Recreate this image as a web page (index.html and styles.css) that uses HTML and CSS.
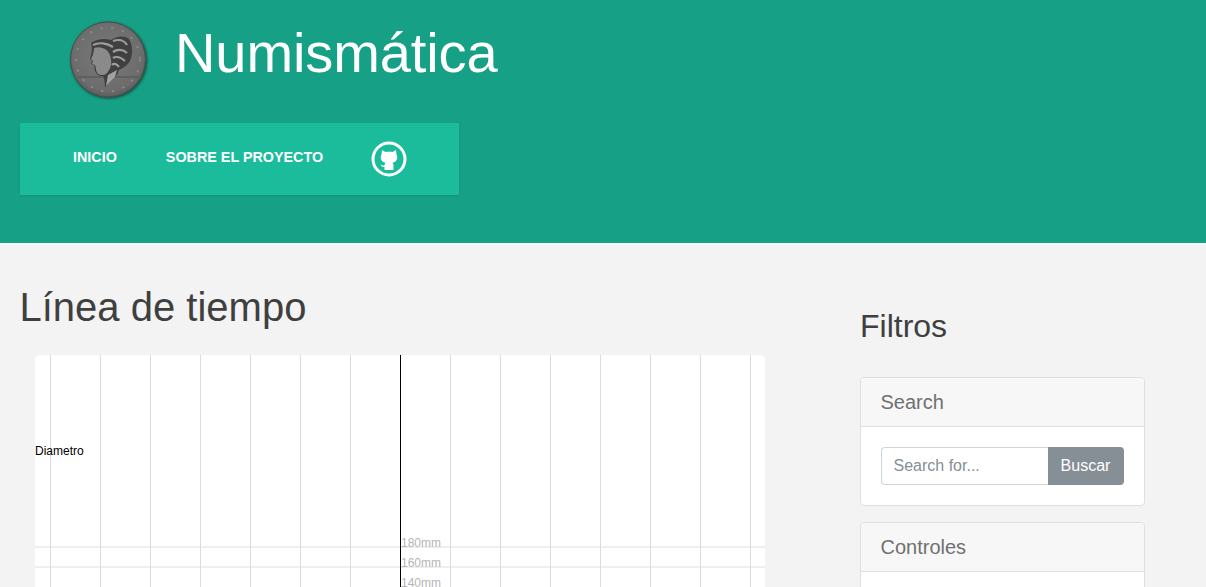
FILE: index.html
```html
<!DOCTYPE html>
<html lang="es">
<head>
    <meta charset="UTF-8">
    <title>Numismática</title>
    <link rel="stylesheet" href="styles.css">
</head>
<body>
    <header class="site-header">
        <div class="brand">
            <svg class="coin" width="80" height="80" viewBox="0 0 80 80">
                <defs>
                    <radialGradient id="coinFill" cx="50%" cy="45%" r="55%">
                        <stop offset="0" stop-color="#7b7b7b"/>
                        <stop offset="0.85" stop-color="#6c6c6c"/>
                        <stop offset="1" stop-color="#5c5c5c"/>
                    </radialGradient>
                    <filter id="soft" x="-10%" y="-10%" width="120%" height="120%">
                        <feGaussianBlur stdDeviation="0.6"/>
                    </filter>
                    <filter id="edge" x="-10%" y="-10%" width="120%" height="120%">
                        <feGaussianBlur stdDeviation="1"/>
                    </filter>
                </defs>
                <circle cx="40" cy="40.5" r="38.5" fill="#1e4a40" opacity="0.85" filter="url(#edge)"/>
                <circle cx="39" cy="39.5" r="37.5" fill="url(#coinFill)" stroke="#4c4c4c" stroke-width="1"/>
                <g filter="url(#soft)">
                    <circle cx="39" cy="39.5" r="32" fill="none" stroke="#8a8a8a" stroke-width="2" stroke-dasharray="2 9"/>
                    <path d="M6 57 H72" stroke="#606060" stroke-width="2"/>
                    <path d="M22 23 C27 19 36 18 42 20 C48 16 55 15 60 19 C64 25 64 35 61 41 C58 46 54 48 50 50 L48 55 L36 67 C36 62 35 58 34 56 C30 56 27 54 26 51 L25 45 L22 44 L23 41 L21 39 C22 34 24 30 22 23 Z" fill="#404040"/>
                    <path d="M25 28 C31 26 37 28 40 33 C43 39 43 46 40 50 C38 54 36 55 33 55 C29 55 27 52 27 49 L26 45 L23 44 L24 41 L22 39 C24 35 25 32 25 28 Z" fill="#8a8a8a"/>
                    <path d="M24 25 C30 22 38 23 44 27 M44 21 C50 19 55 20 58 25 M44 32 C48 29 54 29 58 33 M44 38 C47 36 52 37 56 41 M43 45 C45 43 48 44 50 47" fill="none" stroke="#9c9c9c" stroke-width="2.2"/>
                    <path d="M39 55 L48 50 L46 57 L37 66 Z" fill="#a2a2a2"/>
                </g>
            </svg>
            <h1 class="site-title">Numismática</h1>
        </div>
        <nav class="main-nav">
            <a class="nav-link nav-first" href="#">INICIO</a>
            <a class="nav-link nav-second" href="#">SOBRE EL PROYECTO</a>
            <a class="nav-github" href="#">
                <svg width="36" height="36" viewBox="0 0 36 36">
                    <circle cx="18" cy="18" r="16" fill="none" stroke="#fff" stroke-width="3"/>
                    <path d="M11 9 L14.5 11 C16.5 10.5 19.5 10.5 21.5 11 L25 9 L25.5 13.5 C26.8 15.5 26.5 19 24.5 20.5 C23.5 21.2 22.5 21.6 21.5 21.8 C22.2 22.5 22.5 23.4 22.5 24.5 L22.5 29 L13.5 29 L13.5 26 C11.5 26.2 10.5 25.4 9.5 23.5 C10.8 24 12 24.8 13.5 24.5 C13.5 23.4 13.8 22.5 14.5 21.8 C13.5 21.6 12.5 21.2 11.5 20.5 C9.5 19 9.2 15.5 10.5 13.5 Z" fill="#fff"/>
                </svg>
            </a>
        </nav>
    </header>

    <main class="content">
        <section class="timeline-col">
            <h2 class="timeline-title">Línea de tiempo</h2>
            <div class="timeline-chart">
                <svg width="730" height="232" viewBox="0 0 730 232">
                    <g class="grid-x">
                        <line x1="15.5" y1="0" x2="15.5" y2="232"/>
                        <line x1="65.5" y1="0" x2="65.5" y2="232"/>
                        <line x1="115.5" y1="0" x2="115.5" y2="232"/>
                        <line x1="165.5" y1="0" x2="165.5" y2="232"/>
                        <line x1="215.5" y1="0" x2="215.5" y2="232"/>
                        <line x1="265.5" y1="0" x2="265.5" y2="232"/>
                        <line x1="315.5" y1="0" x2="315.5" y2="232"/>
                        <line x1="415.5" y1="0" x2="415.5" y2="232"/>
                        <line x1="465.5" y1="0" x2="465.5" y2="232"/>
                        <line x1="515.5" y1="0" x2="515.5" y2="232"/>
                        <line x1="565.5" y1="0" x2="565.5" y2="232"/>
                        <line x1="615.5" y1="0" x2="615.5" y2="232"/>
                        <line x1="665.5" y1="0" x2="665.5" y2="232"/>
                        <line x1="715.5" y1="0" x2="715.5" y2="232"/>
                    </g>
                    <g class="grid-y">
                        <line x1="0" y1="192" x2="730" y2="192"/>
                        <line x1="0" y1="212" x2="730" y2="212"/>
                    </g>
                    <line class="axis" x1="365.5" y1="0" x2="365.5" y2="232"/>
                    <text class="label-group" x="0" y="100">Diametro</text>
                    <text class="label-tick" x="366" y="192">180mm</text>
                    <text class="label-tick" x="366" y="212">160mm</text>
                    <text class="label-tick" x="366" y="232">140mm</text>
                </svg>
            </div>
        </section>

        <aside class="sidebar">
            <h3 class="sidebar-title">Filtros</h3>
            <div class="card">
                <div class="card-header">Search</div>
                <div class="card-body">
                    <div class="search-group">
                        <input class="search-input" type="text" placeholder="Search for...">
                        <button class="search-btn">Buscar</button>
                    </div>
                </div>
            </div>
            <div class="card">
                <div class="card-header">Controles</div>
                <div class="card-body"></div>
            </div>
        </aside>
    </main>
</body>
</html>
```

FILE: styles.css
```css
html, body {
    height: 587px;
    overflow: hidden;
}
body {
    margin: 0;
    font-family: "Liberation Sans", Arial, sans-serif;
    background-color: #f3f3f3;
    color: #3f3f3f;
}
.site-header {
    height: 243px;
    box-sizing: border-box;
    background-color: #16a085;
    padding: 20px 20px 0;
}
.brand {
    display: flex;
    align-items: flex-start;
    padding-left: 49px;
    height: 103px;
}
.site-title {
    margin: 1px 0 0 26px;
    font-size: 56px;
    font-weight: 400;
    line-height: 64px;
    letter-spacing: -0.1px;
    color: #fff;
}
.main-nav {
    display: flex;
    align-items: center;
    width: 439px;
    height: 72px;
    background-color: #1abc9c;
    box-shadow: 0 1px 2px rgba(0, 0, 0, 0.1);
}
.nav-link {
    color: #fff;
    font-size: 14.35px;
    font-weight: 700;
    text-decoration: none;
    margin-bottom: 5px;
}
.nav-first {
    margin-left: 53px;
}
.nav-second {
    margin-left: 49px;
}
.nav-github {
    display: flex;
    margin-left: 48px;
}
.content {
    display: flex;
    padding: 0 20px;
}
.timeline-col {
    width: 840px;
}
.timeline-title {
    margin: 40px 0 24px -0.5px;
    font-size: 40px;
    font-weight: 400;
    line-height: 48px;
}
.timeline-chart {
    width: 730px;
    height: 232px;
    margin-left: 15px;
    background-color: #fff;
    border-radius: 5px 5px 0 0;
    overflow: hidden;
}
.timeline-chart svg {
    display: block;
}
.grid-x line {
    stroke: #dcdcdc;
    stroke-width: 1;
}
.grid-y line {
    stroke: #dedede;
    stroke-width: 1;
}
.axis {
    stroke: #000;
    stroke-width: 1;
}
.label-group {
    font-size: 12px;
    fill: #000;
}
.label-tick {
    font-size: 12px;
    fill: #b5b5b5;
}
.sidebar {
    width: 285px;
}
.sidebar-title {
    margin: 64px 0 32px;
    font-size: 32px;
    font-weight: 400;
    line-height: 38px;
}
.card {
    background-color: #fff;
    border: 1px solid #dfdfdf;
    border-radius: 4px;
    margin-bottom: 16px;
}
.card-header {
    height: 49px;
    box-sizing: border-box;
    padding: 12px 19.5px 0;
    font-size: 20px;
    line-height: 24px;
    color: #707070;
    background-color: #f7f7f7;
    border-bottom: 1px solid #dfdfdf;
    border-radius: 4px 4px 0 0;
}
.card-body {
    padding: 20px;
}
.search-group {
    display: flex;
    height: 38px;
}
.search-input {
    flex: 1;
    min-width: 0;
    box-sizing: border-box;
    border: 1px solid #ced4da;
    border-right: 0;
    border-radius: 4px 0 0 4px;
    padding: 0 11.5px;
    font-family: inherit;
    font-size: 16px;
    background-color: #fff;
}
.search-input::placeholder {
    color: #868e96;
    opacity: 1;
}
.search-btn {
    width: 76px;
    border: 0;
    border-radius: 0 4px 4px 0;
    background-color: #868e96;
    color: #fff;
    font-family: inherit;
    font-size: 16px;
    padding: 0 1px 0 0;
}
```
